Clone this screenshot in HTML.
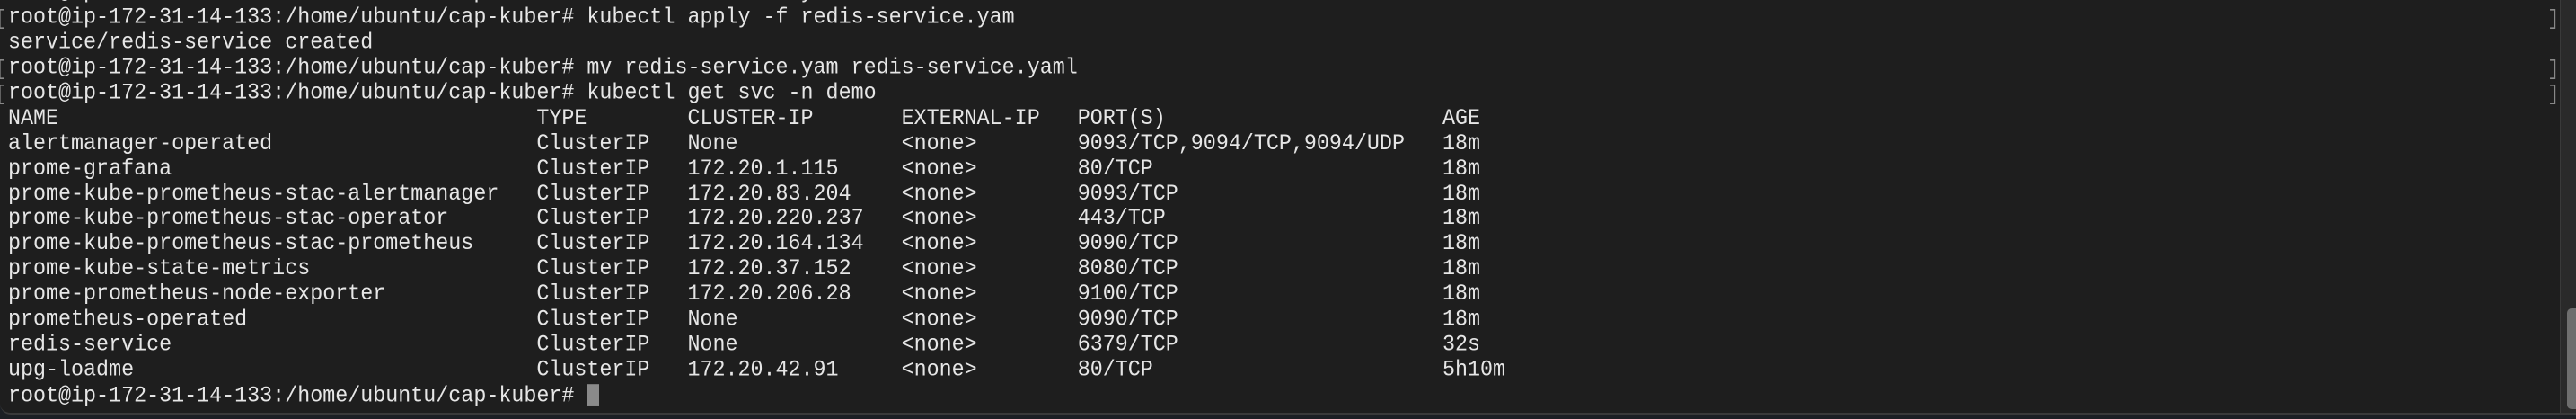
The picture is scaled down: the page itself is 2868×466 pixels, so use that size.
<!DOCTYPE html>
<html><head><meta charset="utf-8"><style>
html,body{margin:0;padding:0;}
body{width:2868px;height:466px;background:#1c1f24;overflow:hidden;position:relative;}
#win{position:absolute;left:0;top:0;width:2868px;height:459px;background:#1e1e1e;border-bottom-left-radius:12px;border-bottom:2px solid #3a3a3a;overflow:hidden;}
pre{position:absolute;left:9px;top:-21px;margin:0;font-family:"Liberation Mono",monospace;font-size:23.35px;line-height:25.93px;color:#e6e6e6;transform:scaleY(1.08);transform-origin:0 0;}
.sb{position:absolute;left:2850px;top:0;width:18px;height:459px;background:#2a2a2a;border-left:1px solid #3a3a3a;}
.th{position:absolute;left:2858px;top:343px;width:10px;height:112px;background:#6e6e6e;border-radius:5px 0 0 5px;}
.br{position:absolute;font-family:"Liberation Mono",monospace;font-size:23px;line-height:28px;color:#888;}
.cur{display:inline-block;width:14px;height:22px;background:#8a8a8a;vertical-align:-4px;}
</style></head><body>
<div id="win">
<pre>root@ip-172-31-14-133:/home/ubuntu/cap-kuber# vi redis-service.yam
root@ip-172-31-14-133:/home/ubuntu/cap-kuber# kubectl apply -f redis-service.yam
service/redis-service created
root@ip-172-31-14-133:/home/ubuntu/cap-kuber# mv redis-service.yam redis-service.yaml
root@ip-172-31-14-133:/home/ubuntu/cap-kuber# kubectl get svc -n demo
NAME                                      TYPE        CLUSTER-IP       EXTERNAL-IP   PORT(S)                      AGE
alertmanager-operated                     ClusterIP   None             &lt;none&gt;        9093/TCP,9094/TCP,9094/UDP   18m
prome-grafana                             ClusterIP   172.20.1.115     &lt;none&gt;        80/TCP                       18m
prome-kube-prometheus-stac-alertmanager   ClusterIP   172.20.83.204    &lt;none&gt;        9093/TCP                     18m
prome-kube-prometheus-stac-operator       ClusterIP   172.20.220.237   &lt;none&gt;        443/TCP                      18m
prome-kube-prometheus-stac-prometheus     ClusterIP   172.20.164.134   &lt;none&gt;        9090/TCP                     18m
prome-kube-state-metrics                  ClusterIP   172.20.37.152    &lt;none&gt;        8080/TCP                     18m
prome-prometheus-node-exporter            ClusterIP   172.20.206.28    &lt;none&gt;        9100/TCP                     18m
prometheus-operated                       ClusterIP   None             &lt;none&gt;        9090/TCP                     18m
redis-service                             ClusterIP   None             &lt;none&gt;        6379/TCP                     32s
upg-loadme                                ClusterIP   172.20.42.91     &lt;none&gt;        80/TCP                       5h10m
root@ip-172-31-14-133:/home/ubuntu/cap-kuber# <span class="cur"></span></pre>
<div class="br" style="left:-6px;top:7px">[</div>
<div class="br" style="left:-6px;top:63px">[</div>
<div class="br" style="left:-6px;top:91px">[</div>
<div class="br" style="left:2836px;top:7px">]</div>
<div class="br" style="left:2836px;top:63px">]</div>
<div class="br" style="left:2836px;top:91px">]</div>
<div class="sb"></div><div class="th"></div>
</div>
</body></html>
